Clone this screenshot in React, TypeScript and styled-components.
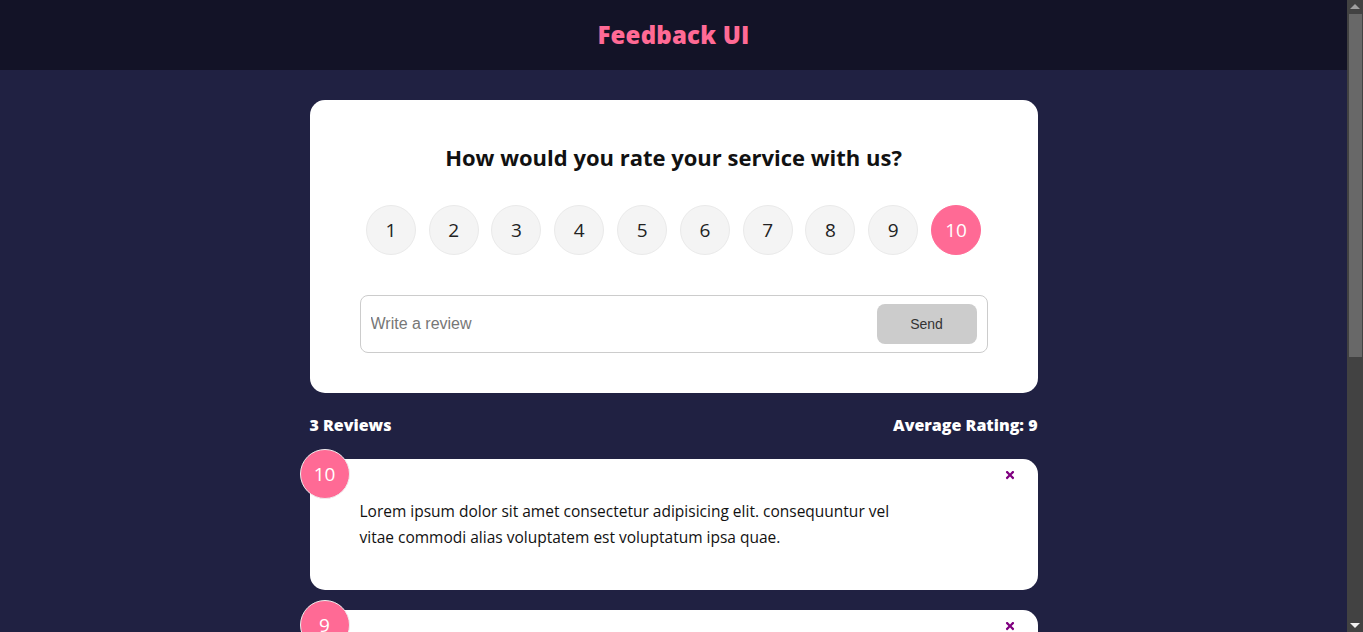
import styled, { createGlobalStyle } from "styled-components";
import { useState } from "react";
import { FaTimes } from "react-icons/fa";

const GlobalStyle = createGlobalStyle`
  html {
    color-scheme: dark;
    background-color: #424242;
  }
  * {
    box-sizing: border-box;
  }
  body {
    margin: 0 16px 0 0;
    min-height: 100vh;
    background-color: #202142;
    font-family: "Open Sans", "Liberation Sans", sans-serif;
    line-height: 1.6;
  }
`;

// the reference shows the browser's dark scrollbar, drawn over the gutter
const ScrollThumb = styled.div`
  position: fixed;
  top: 14px;
  right: 1px;
  width: 13px;
  height: 343px;
  background-color: #686868;
`;

const ScrollArrow = styled.div<{ down?: boolean }>`
  position: fixed;
  right: 3px;
  ${({ down }) => (down ? "bottom: 4px;" : "top: 4px;")}
  width: 0;
  height: 0;
  border-left: 5px solid transparent;
  border-right: 5px solid transparent;
  ${({ down }) =>
    down ? "border-top: 5px solid #f0f0f0;" : "border-bottom: 5px solid #a0a0a0;"}
`;

const Header = styled.header`
  height: 70px;
  display: flex;
  align-items: center;
  justify-content: center;
  background-color: rgba(0, 0, 0, 0.4);
`;

const Title = styled.h2`
  margin: 0;
  color: #ff6a95;
  font-size: 24px;
  font-weight: 800;
  letter-spacing: 0.2px;
`;

const Container = styled.main`
  max-width: 768px;
  margin: 30px auto 0;
  padding: 0 20px 218px;
`;

const Card = styled.div`
  position: relative;
  background-color: #fff;
  color: #333;
  border-radius: 15px;
  padding: 40px 50px;
`;

const Question = styled.h2`
  margin: 0;
  text-align: center;
  color: #111;
  font-size: 22px;
  font-weight: 700;
  line-height: 34px;
`;

const RatingList = styled.ul`
  list-style: none;
  margin: 31px 0 40px;
  padding: 0;
  display: flex;
  justify-content: space-around;
  align-items: center;
`;

const RatingItem = styled.li<{ selected?: boolean }>`
  width: 50px;
  height: 50px;
  border-radius: 50%;
  display: flex;
  align-items: center;
  justify-content: center;
  font-size: 19px;
  cursor: pointer;
  color: ${({ selected }) => (selected ? "#fff" : "#222")};
  background-color: ${({ selected }) => (selected ? "#ff6a95" : "#f4f4f4")};
  border: 1px solid ${({ selected }) => (selected ? "#ff6a95" : "#eaeaea")};
`;

const InputGroup = styled.div`
  display: flex;
  align-items: center;
  border: 1px solid #ccc;
  border-radius: 8px;
  padding: 8px 10px;
`;

const Input = styled.input`
  flex-grow: 1;
  border: none;
  background: #fff;
  color: #333;
  font-family: "Liberation Sans", Arial, sans-serif;
  font-size: 16px;
  height: 39px;
  padding: 0;

  &:focus {
    outline: none;
  }

  &::placeholder {
    color: #777;
  }
`;

const SendButton = styled.button`
  width: 100px;
  height: 40px;
  border: none;
  border-radius: 8px;
  background-color: #ccc;
  color: #333;
  font-family: "Liberation Sans", Arial, sans-serif;
  font-size: 14px;
  cursor: not-allowed;
`;

const Stats = styled.div`
  display: flex;
  justify-content: space-between;
  align-items: center;
  margin: 20px 0 22px;
  color: #fff;
  font-size: 16px;
  font-weight: 800;
  line-height: 24px;
`;

const ReviewList = styled.div`
  display: flex;
  flex-direction: column;
  gap: 20px;
`;

const NumDisplay = styled.div`
  position: absolute;
  top: -10px;
  left: -10px;
  width: 50px;
  height: 50px;
  border-radius: 50%;
  border: 1px solid #eee;
  background-color: #ff6a95;
  color: #fff;
  display: flex;
  align-items: center;
  justify-content: center;
  font-size: 19px;
`;

const CloseButton = styled.button`
  position: absolute;
  top: 6px;
  right: 18px;
  background: none;
  border: none;
  padding: 4px;
  color: purple;
  display: flex;
  cursor: pointer;
`;

const ReviewText = styled.p`
  margin: 0;
  color: #111;
  font-size: 15.5px;
  line-height: 25.6px;
  padding-right: 70px;
`;

const reviews = [
  {
    id: 1,
    rating: 10,
    text: "Lorem ipsum dolor sit amet consectetur adipisicing elit. consequuntur vel vitae commodi alias voluptatem est voluptatum ipsa quae.",
  },
  {
    id: 2,
    rating: 9,
    text: "Lorem ipsum dolor sit amet consectetur adipisicing elit. consequuntur vel vitae commodi alias voluptatem est voluptatum ipsa quae.",
  },
  {
    id: 3,
    rating: 8,
    text: "Lorem ipsum dolor sit amet consectetur adipisicing elit. consequuntur vel vitae commodi alias voluptatem est voluptatum ipsa quae.",
  },
];

export default function App() {
  const [selected, setSelected] = useState(10);
  const [text, setText] = useState("");

  const average =
    Math.round((reviews.reduce((acc, r) => acc + r.rating, 0) / reviews.length) * 10) / 10;

  return (
    <>
      <GlobalStyle />
      <ScrollArrow />
      <ScrollThumb />
      <ScrollArrow down />
      <Header>
        <Title>Feedback UI</Title>
      </Header>
      <Container>
        <Card>
          <Question>How would you rate your service with us?</Question>
          <RatingList>
            {Array.from({ length: 10 }, (_, i) => i + 1).map((n) => (
              <RatingItem key={n} selected={n === selected} onClick={() => setSelected(n)}>
                {n}
              </RatingItem>
            ))}
          </RatingList>
          <InputGroup>
            <Input
              placeholder="Write a review"
              value={text}
              onChange={(e) => setText(e.target.value)}
            />
            <SendButton>Send</SendButton>
          </InputGroup>
        </Card>

        <Stats>
          <span>{reviews.length} Reviews</span>
          <span>Average Rating: {average}</span>
        </Stats>

        <ReviewList>
          {reviews.map((review) => (
            <Card key={review.id}>
              <NumDisplay>{review.rating}</NumDisplay>
              <CloseButton>
                <FaTimes size={12} />
              </CloseButton>
              <ReviewText>{review.text}</ReviewText>
            </Card>
          ))}
        </ReviewList>
      </Container>
    </>
  );
}
